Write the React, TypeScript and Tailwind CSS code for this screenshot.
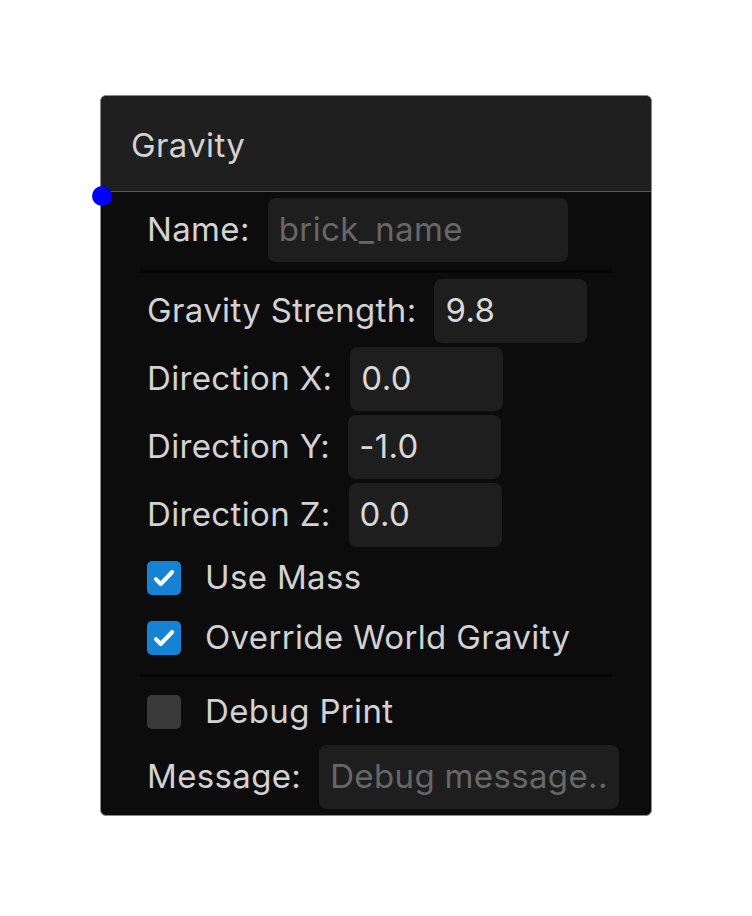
import type { ReactNode } from 'react';

function Field({ label, value, placeholder, width }: { label: string; value?: string; placeholder?: string; width: string }) {
  return (
    <div className="flex items-center gap-[18px] pl-[7px]">
      <span className="shrink-0 text-[#d2d2d2]">{label}</span>
      <div className={`flex h-[64px] shrink-0 items-center rounded-lg bg-[#1e1e1e] px-[11px] ${width}`}>
        {value ? <span className="text-[#d8d8d8]">{value}</span> : <span className="text-[#676767]">{placeholder}</span>}
      </div>
    </div>
  );
}

function Check({ label, checked }: { label: string; checked?: boolean }) {
  return (
    <div className="flex h-[60px] items-center gap-6 pl-[7px]">
      <span
        className={`flex h-[34px] w-[34px] items-center justify-center rounded-[5px] ${checked ? 'bg-[#1483d6]' : 'bg-[#3a3a3a]'}`}
      >
        {checked ? (
          <svg width="26" height="26" viewBox="0 0 24 24" fill="none" stroke="white" strokeWidth="3.8" strokeLinecap="round" strokeLinejoin="round">
            <path d="M4.5 13l4.5 4.5L19.5 6.5" />
          </svg>
        ) : null}
      </span>
      <span className="text-[#d2d2d2]">{label}</span>
    </div>
  );
}

function Divider({ className }: { className: string }) {
  return <div className={`h-[3px] bg-[#050505] ${className}`} />;
}

function Section({ children }: { children: ReactNode }) {
  return <div className="flex flex-col gap-1">{children}</div>;
}

export default function App() {
  return (
    <div className="min-h-[916px] bg-white pl-[100px] pt-[95px] font-['Inter',sans-serif] text-[33px] tracking-[0.35px]">
      <div className="relative w-[552px]">
        <div className="rounded-md border border-[#8a8a8a] bg-[#0c0c0c]">
          <div className="flex h-[96px] items-center rounded-t-md border-b border-[#5a5a5a] bg-[#1f1f1f] pl-[30px] pt-[4px] text-[#d2d2d2]">
            Gravity
          </div>
          <div className="flex flex-col px-[39px] pt-[6px] pb-[6px]">
            <Field label="Name:" placeholder="brick_name" width="w-[300px]" />
            <Divider className="mt-[8px] mb-[6px]" />
            <Section>
              <Field label="Gravity Strength:" value="9.8" width="w-[153px]" />
              <Field label="Direction X:" value="0.0" width="w-[153px]" />
              <Field label="Direction Y:" value="-1.0" width="w-[153px]" />
              <Field label="Direction Z:" value="0.0" width="w-[153px]" />
            </Section>
            <div className="mt-[1px]">
              <Check label="Use Mass" checked />
              <Check label="Override World Gravity" checked />
            </div>
            <Divider className="mt-[6px] mb-[5px]" />
            <Check label="Debug Print" />
            <div className="mt-[3px]">
              <Field label="Message:" placeholder="Debug message.." width="w-[300px]" />
            </div>
          </div>
        </div>
        <span className="absolute left-[-8px] top-[91px] h-5 w-5 rounded-full bg-[#0000ff]" />
      </div>
    </div>
  );
}
